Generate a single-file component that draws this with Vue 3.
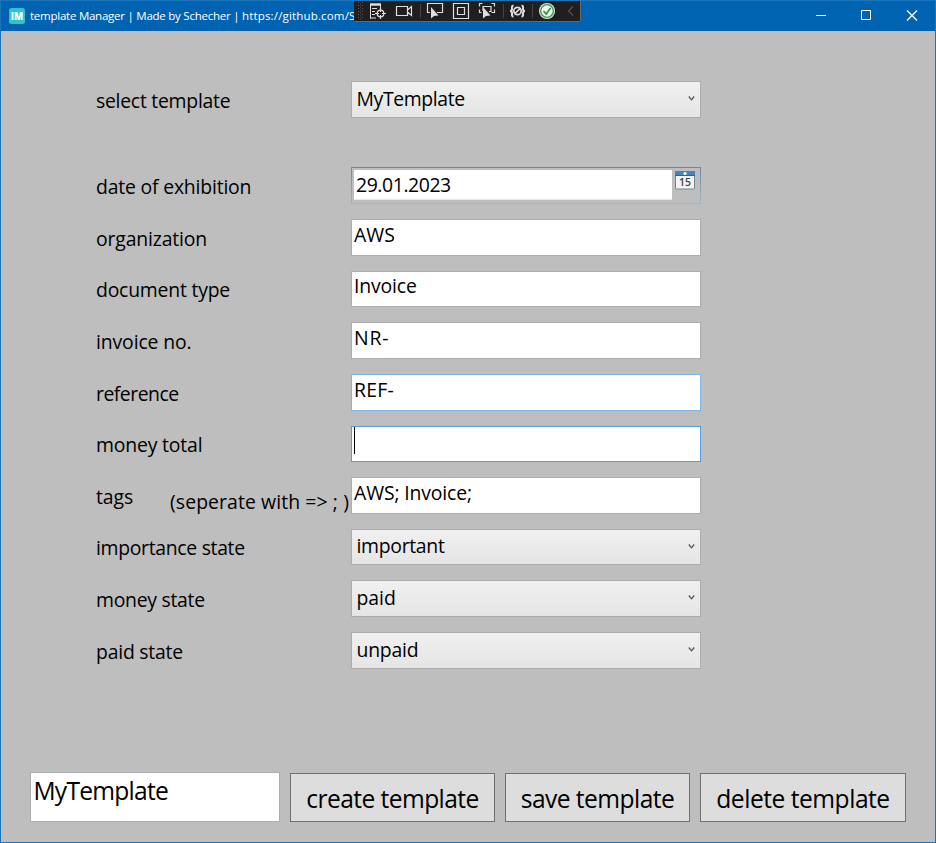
<script setup>
// Spreads the letters of a text so that it takes the given advance width.
const applyFit = (el, { value }) => {
  el.style.letterSpacing = '0px'
  const natural = el.getBoundingClientRect().width
  el.style.letterSpacing = (value - natural) / el.textContent.length + 'px'
}
const vFit = { mounted: applyFit }

const rows = [
  { label: 'select template', lw: 134.3, kind: 'combo', value: 'MyTemplate', vw: 108.3, after: true },
  { label: 'date of exhibition', lw: 155.3, kind: 'date', value: '29.01.2023', vw: 94.8 },
  { label: 'organization', lw: 111, kind: 'text', value: 'AWS', vw: 41 },
  { label: 'document type', lw: 134, kind: 'text', value: 'Invoice', vw: 62.7, short: true },
  { label: 'invoice no.', lw: 95.5, kind: 'text', value: 'NR-', vw: 35.5 },
  { label: 'reference', lw: 82.7, kind: 'text', value: 'REF-', vw: 40, state: 'hover' },
  { label: 'money total', lw: 106.4, kind: 'text', value: '', vw: 0, short: true, state: 'focus' },
  { label: 'tags', lw: 37.3, hint: '(seperate with => ; )', kind: 'text', value: 'AWS; Invoice;', vw: 118 },
  { label: 'importance state', lw: 148.8, kind: 'combo', value: 'important', vw: 88, short: true },
  { label: 'money state', lw: 108.8, kind: 'combo', value: 'paid', vw: 39.3 },
  { label: 'paid state', lw: 87, kind: 'combo', value: 'unpaid', vw: 61.8 }
]

const buttons = [
  { text: 'create template', w: 172.6, cls: 'create' },
  { text: 'save template', w: 153.6, cls: 'save' },
  { text: 'delete template', w: 173.4, cls: 'delete' }
]
</script>

<template>
  <div class="window">
    <header class="titlebar">
      <svg class="logo" width="16" height="16" viewBox="0 0 16 16">
        <rect width="16" height="16" rx="2.5" fill="#2ec4c9" />
        <text x="8" y="12" text-anchor="middle" textLength="12.5" lengthAdjust="spacingAndGlyphs" class="logo-text">IM</text>
      </svg>
      <div class="title"><span v-fit="212">template Manager | Made by Schecher |&nbsp;</span><span v-fit="113.5">https://github.com/S</span></div>
      <svg class="controls" width="138" height="30" viewBox="0 0 138 30" fill="none" stroke="#fff">
        <path d="M19 14.5h10" />
        <path d="M64.500 9.500h9v9h-9z" />
        <path d="M110 9.500l10 10M120 9.500l-10 10" stroke-width="1.200" />
      </svg>
    </header>

    <svg class="debugbar" width="227" height="22" viewBox="0 0 227 22" fill="none" stroke="#dedede">
      <path d="M0 0h227v22H0z" fill="#1f1f1f" stroke="none" />
      <path d="M0 .5h226.500v21H0" stroke="#666" />
      <g stroke="#5a5a5a" stroke-dasharray="1 2">
        <path d="M4.500 2v18M8.500 2v18" />
        <path d="M6.500 3.500v16" />
      </g>
      <!-- live visual tree -->
      <path d="M16 4.500h11" stroke-width="2.500" />
      <path d="M16.500 4v14.500M26.500 4v4M18 8.500h5M18 11.500h3M18 14.500h3M16 18h6" />
      <circle cx="26.500" cy="13.500" r="3.300" stroke-width="1.300" />
      <path d="M26.500 8v4M26.500 15v4M21 13.500h4M28 13.500h4" stroke-width="1.200" />
      <!-- camera -->
      <path d="M42.500 6.500h11v9h-11zM53.500 10l4-3.500v9l-4-3.500" stroke-width="1.200" />
      <path d="M66.500 4v14M149.500 4v14M178.500 4v14" stroke="#444" />
      <!-- select element -->
      <path d="M76 12.500h-2.500v-9h15v9H83" stroke-width="1.200" />
      <path d="M77 7v11.500l3-2.500 4.500-.5z" fill="#dedede" stroke="none" />
      <!-- layout adorners -->
      <path d="M99.500 3.500h15v15h-15zM103.500 7.500h7v7h-7z" stroke-width="1.200" />
      <!-- track focus -->
      <path d="M128.500 3.500h-3v3M137.500 3.500h3v3M140.500 9.500v3h-3M125.500 9.500v3h2M129 11V6.500h8v5h-2" stroke-width="1.200" />
      <path d="M129 7v11.500l3-2.500 4.500-.5z" fill="#dedede" stroke="none" />
      <!-- binding failures -->
      <path d="M159.500 5.500c-2 0-1.500 2-1.500 3.500s-1 2-2 2c1 0 2 .5 2 2s-.5 3.500 1.500 3.500M167.500 5.500c2 0 1.500 2 1.500 3.500s1 2 2 2c-1 0-2 .5-2 2s.5 3.500-1.500 3.500" stroke-width="2" />
      <circle cx="163.500" cy="11" r="3.700" stroke-width="1.700" />
      <path d="M161 13.500l5-5" stroke-width="1.700" />
      <!-- hot reload -->
      <circle cx="193" cy="11" r="8" fill="#e8e8e8" stroke="none" />
      <circle cx="193" cy="11" r="6.300" fill="#f4f4f4" stroke="#2f9a48" stroke-width="1.300" />
      <path d="M189.500 11l2.700 3 4.300-6" stroke="#2f9a48" stroke-width="1.800" />
      <path d="M219 6.500l-4.500 4.500 4.500 4.500" stroke="#555" stroke-width="1.200" />
    </svg>

    <main class="form">
      <div
        v-for="row in rows"
        :key="row.label"
        class="row"
        :class="{ short: row.short, spaced: row.after }"
      >
        <div class="label">
          <span v-fit="row.lw">{{ row.label }}</span>
          <div v-if="row.hint" class="hint"><span v-fit="179">{{ row.hint }}</span></div>
        </div>

        <div v-if="row.kind === 'combo'" class="combo">
          <span v-fit="row.vw">{{ row.value }}</span>
          <svg class="arrow" width="7" height="5" viewBox="0 0 7 5">
            <path d="M.8.500L3.500 3.800 6.200.500" fill="none" stroke="#555" stroke-width="1.300" />
          </svg>
        </div>

        <div v-else-if="row.kind === 'date'" class="date">
          <div class="date-text"><span v-fit="row.vw">{{ row.value }}</span></div>
          <svg class="calendar" width="20" height="19" viewBox="0 0 20 19">
            <rect x=".5" y=".5" width="19" height="17.500" rx="1" fill="#f3f4f5" stroke="#7b8289" />
            <path d="M0 0h20v5H0z" fill="#4385bd" />
            <path d="M0 4.500h20" stroke="#38618a" />
            <circle cx="10" cy="2.500" r="1.600" fill="#fff" />
            <text x="10" y="15" text-anchor="middle" class="cal-text" textLength="12" lengthAdjust="spacingAndGlyphs">15</text>
          </svg>
        </div>

        <div v-else class="textbox" :class="row.state">
          <span v-if="row.value" v-fit="row.vw">{{ row.value }}</span>
          <i v-else class="caret"></i>
        </div>
      </div>
    </main>

    <footer class="actions">
      <div class="name"><span v-fit="134.5">MyTemplate</span></div>
      <button v-for="b in buttons" :key="b.text" :class="b.cls"><span v-fit="b.w">{{ b.text }}</span></button>
    </footer>
  </div>
</template>

<style>
body {
  margin: 0;
}
</style>

<style scoped>
.window {
  position: relative;
  box-sizing: border-box;
  width: 936px;
  height: 843px;
  border: 1px solid #1a74bb;
  background: #bebebe;
  color: #000;
  display: flex;
  flex-direction: column;
  overflow: hidden;
  font-family: "Open Sans", "Noto Sans", sans-serif;
  font-size: 19.4px;
  white-space: nowrap;
}
.titlebar {
  height: 30px;
  flex: none;
  background: #0063b1;
  color: #fff;
  display: flex;
  align-items: center;
}
.logo {
  margin-left: 8px;
  flex: none;
}
.logo-text {
  font: 800 11px "Open Sans", sans-serif;
  fill: #fff;
}
.title {
  margin-left: 5px;
  font-size: 11.5px;
  line-height: 30px;
  width: 326px;
}
.controls {
  margin-left: auto;
}
.debugbar {
  position: absolute;
  left: 353px;
  top: -1px;
}
.form {
  padding: 50px 0 0 95px;
  display: flex;
  flex-direction: column;
  gap: 15px;
  flex: 1;
}
.row {
  height: 37px;
  display: grid;
  grid-template-columns: 255px 350px;
}
.row.short {
  height: 36px;
}
.row.spaced {
  margin-bottom: 34px;
}
.label {
  display: flex;
  justify-content: space-between;
  height: 36px;
  line-height: 40px;
}
.short .label {
  line-height: 38px;
}
.hint {
  line-height: 50px;
  width: 181px;
}
.combo,
.textbox,
.date,
.name,
button {
  box-sizing: border-box;
}
.combo {
  border: 1px solid #acacac;
  background: linear-gradient(#f0f0f0, #e5e5e5);
  display: flex;
  justify-content: space-between;
  padding: 0 5px 0 4.5px;
  line-height: 34px;
}
.short .combo {
  line-height: 32px;
}
.arrow {
  margin-top: 14px;
}
.textbox {
  border: 1px solid #abadb3;
  background: #fff;
  padding-left: 2px;
  line-height: 30px;
}
.short .textbox {
  line-height: 28px;
}
.textbox.hover {
  border-color: #7eb4ea;
}
.textbox.focus {
  border-color: #569de5;
}
.caret {
  display: block;
  width: 1px;
  height: 27px;
  background: #000;
}
.date {
  border: 1px solid;
  border-image: linear-gradient(#73879a, #a7b3be) 1;
  display: flex;
  padding: 2px 5px 3px 2px;
  justify-content: space-between;
}
.date-text {
  width: 316px;
  height: 29px;
  background: #fff;
  border-bottom: 1px solid #e3e9ef;
  padding-left: 2px;
  line-height: 30px;
}
.calendar {
  margin-top: 1px;
}
.cal-text {
  font: 600 10px "Open Sans", sans-serif;
  fill: #444;
}
.actions {
  height: 50px;
  padding: 0 29px 20px;
  display: flex;
  align-items: flex-end;
  gap: 10px;
  font-size: 24.6px;
}
.name {
  width: 250px;
  height: 50px;
  background: #fff;
  border: 1px solid #abadb3;
  padding-left: 2.5px;
  line-height: 36px;
}
button {
  height: 49px;
  padding: 2px 0 0;
  border: 1px solid #707070;
  background: #ddd;
  color: #000;
  font: inherit;
  text-align: center;
}
.create {
  width: 205px;
}
.save {
  width: 185px;
}
.delete {
  width: 206px;
}
</style>
